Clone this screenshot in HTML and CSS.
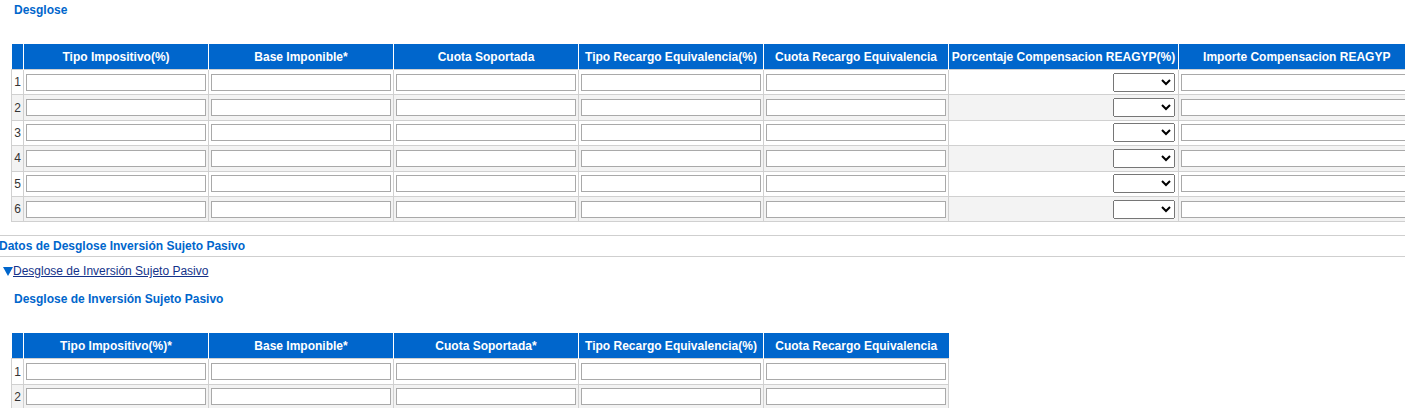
FILE: index.html
```html
<!DOCTYPE html>
<html lang="es">
<head>
  <meta charset="UTF-8">
  <title>Desglose</title>
  <link rel="stylesheet" href="styles.css">
</head>
<body>
  <h3 class="section-title">Desglose</h3>

  <table class="grid grid-wide">
    <colgroup>
      <col class="col-idx">
      <col class="col-std"><col class="col-std"><col class="col-std"><col class="col-std"><col class="col-std">
      <col class="col-pct">
      <col class="col-last">
    </colgroup>
    <thead>
      <tr>
        <th></th>
        <th>Tipo Impositivo(%)</th>
        <th>Base Imponible*</th>
        <th>Cuota Soportada</th>
        <th>Tipo Recargo Equivalencia(%)</th>
        <th>Cuota Recargo Equivalencia</th>
        <th>Porcentaje Compensacion REAGYP(%)</th>
        <th>Importe Compensacion REAGYP</th>
      </tr>
    </thead>
    <tbody id="desglose"></tbody>
  </table>

  <div class="band">Datos de Desglose Inversión Sujeto Pasivo</div>

  <div class="toggle">
    <svg class="arrow" width="10" height="9" viewBox="0 0 10 9"><polygon points="0,0 10,0 5,9" fill="#0066cc"/></svg><a href="#">Desglose de Inversión Sujeto Pasivo</a>
  </div>

  <h3 class="section-title second">Desglose de Inversión Sujeto Pasivo</h3>

  <table class="grid grid-isp">
    <colgroup>
      <col class="col-idx">
      <col class="col-std"><col class="col-std"><col class="col-std"><col class="col-std"><col class="col-std">
    </colgroup>
    <thead>
      <tr>
        <th></th>
        <th>Tipo Impositivo(%)*</th>
        <th>Base Imponible*</th>
        <th>Cuota Soportada*</th>
        <th>Tipo Recargo Equivalencia(%)</th>
        <th>Cuota Recargo Equivalencia</th>
      </tr>
    </thead>
    <tbody id="isp"></tbody>
  </table>

  <script>
    function fillRows(id, count, withReagyp) {
      const body = document.getElementById(id);
      for (let i = 1; i <= count; i++) {
        const tr = document.createElement('tr');
        let html = '<td class="idx">' + i + '</td>';
        for (let c = 0; c < 5; c++) {
          html += '<td><input type="text"></td>';
        }
        if (withReagyp) {
          html += '<td class="sel"><select><option></option></select></td>';
          html += '<td><input type="text"></td>';
        }
        tr.innerHTML = html;
        body.appendChild(tr);
      }
    }

    fillRows('desglose', 6, true);
    fillRows('isp', 2, false);
  </script>
</body>
</html>
```

FILE: styles.css
```css
body {
  margin: 0;
  font-family: "Liberation Sans", Arial, sans-serif;
  font-size: 12px;
  color: #333;
  overflow-x: hidden;
}

.section-title {
  margin: 0;
  padding: 3px 14px 0;
  line-height: 14px;
  font-size: 12px;
  font-weight: bold;
  color: #0066cc;
}

.section-title.second {
  margin-top: 10px;
}

/* Tables */
.grid {
  border-collapse: collapse;
  table-layout: fixed;
  margin-left: 11px;
  margin-top: 27px;
}

.grid-wide {
  width: 1403px;
}

.grid-isp {
  width: 938px;
}

.col-idx { width: 12px; }
.col-std { width: 185px; }
.col-pct { width: 230px; }
.col-last { width: 236px; }

.grid th {
  background-color: #0066cc;
  color: #fff;
  font-weight: bold;
  font-size: 12px;
  height: 25px;
  padding: 0;
  border-right: 1px solid #fff;
  text-align: center;
  white-space: nowrap;
}

.grid th:last-child {
  border-right: none;
}

.grid td {
  border: 1px solid #d0d0d0;
  padding: 0 2px;
  height: 24.4px;
  background-color: #fff;
}

.grid tbody tr:nth-child(even) td {
  background-color: #f3f3f3;
}

.grid td.idx {
  padding: 0;
  text-align: center;
  font-size: 12px;
  color: #333;
}

.grid td.sel {
  text-align: right;
  padding-right: 3px;
}

.grid input {
  display: block;
  box-sizing: border-box;
  width: 100%;
  height: 17px;
  margin: 0;
  padding: 0 2px;
  border: 1px solid #a9a9a9;
  background: #fff;
  font-size: 12px;
}

.grid select {
  width: 62px;
  height: 19px;
  margin: 0;
  font-size: 12px;
  vertical-align: middle;
}

/* Separator band */
.band {
  margin-top: 13px;
  border-top: 1px solid #cfcfcf;
  border-bottom: 1px solid #cfcfcf;
  line-height: 20px;
  font-weight: bold;
  color: #0066cc;
  text-indent: -1px;
}

.toggle {
  margin-top: 6px;
  padding-left: 3px;
  line-height: 16px;
}

.toggle .arrow {
  vertical-align: -1px;
}

.toggle a {
  color: #13328a;
  text-decoration: underline;
}
```
